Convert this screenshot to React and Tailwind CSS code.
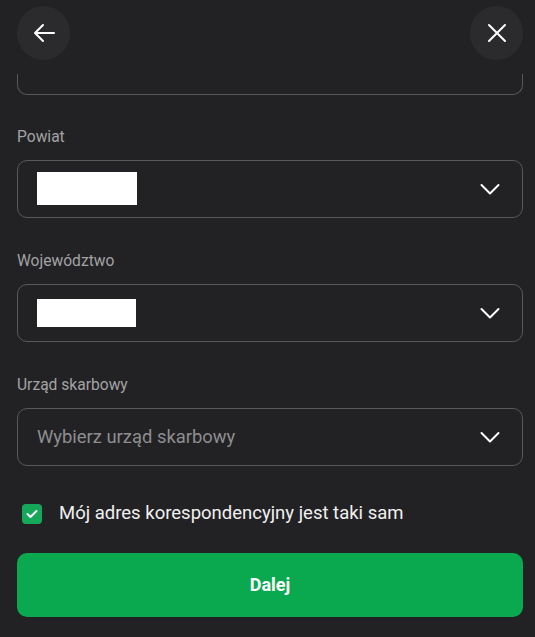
function Chevron() {
  return (
    <svg width="20" height="13" viewBox="0 0 20 13" fill="none" stroke="white" strokeWidth="2" strokeLinecap="round" strokeLinejoin="round">
      <path d="M1.5 2L10 10.5L18.5 2" />
    </svg>
  );
}

function Field({ label, children }) {
  return (
    <div className="flex flex-col">
      <label className="text-[15.6px] leading-5 text-[#a3a3a5] h-5">{label}</label>
      <div className="mt-[13px] h-[58px] rounded-[10px] border border-[#58585a] flex items-center justify-between pl-[19px] pr-[22px]">
        {children}
        <Chevron />
      </div>
    </div>
  );
}

export default function App() {
  return (
    <div
      className="w-[535px] h-[637px] overflow-hidden bg-[#222224] text-white"
      style={{ fontFamily: "Roboto, 'Liberation Sans', sans-serif" }}
    >
      {/* Header */}
      <div className="h-[74px] flex items-start justify-between pl-[17px] pr-[12px] pt-[6px]">
        <button className="w-[53px] h-[54px] rounded-full bg-[#2b2b2d] flex items-center justify-center">
          <svg width="22" height="20" viewBox="0 0 22 20" fill="none" stroke="white" strokeWidth="2" strokeLinecap="round" strokeLinejoin="round">
            <path d="M21 10H2M10 2L2 10L10 18" />
          </svg>
        </button>
        <button className="w-[53px] h-[54px] rounded-full bg-[#2b2b2d] flex items-center justify-center">
          <svg width="20" height="20" viewBox="0 0 20 20" fill="none" stroke="white" strokeWidth="2" strokeLinecap="round">
            <path d="M2 2L18 18M18 2L2 18" />
          </svg>
        </button>
      </div>

      <div className="pl-[17px] pr-[12px]">
        {/* cut-off field above */}
        <div className="h-[21px] border-x border-b border-[#58585a] rounded-b-[10px]" />

        <div className="mt-[32px] flex flex-col gap-[33px]">
          <Field label="Powiat">
            <div className="w-[100px] h-[33px] bg-white -mt-[2px]" />
          </Field>
          <Field label="Województwo">
            <div className="w-[99px] h-[28px] bg-white" />
          </Field>
          <Field label="Urząd skarbowy">
            <span className="text-[18.4px] text-[#8e8e90]">Wybierz urząd skarbowy</span>
          </Field>
        </div>

        <div className="mt-[34px] flex items-center pl-[5px] gap-[17px]">
          <div className="w-[20px] h-[20px] rounded-[4px] bg-[#16a85a] flex items-center justify-center">
            <svg width="12" height="10" viewBox="0 0 12 10" fill="none" stroke="white" strokeWidth="2" strokeLinecap="round" strokeLinejoin="round">
              <path d="M1.5 5L4.5 8L10.5 2" />
            </svg>
          </div>
          <span className="text-[18.5px] text-[#f0f0f0]">Mój adres korespondencyjny jest taki sam</span>
        </div>

        <button className="mt-[25px] w-full h-[64px] rounded-[10px] bg-[#0aa84f] text-white font-bold text-[18px]">
          Dalej
        </button>
      </div>
    </div>
  );
}
